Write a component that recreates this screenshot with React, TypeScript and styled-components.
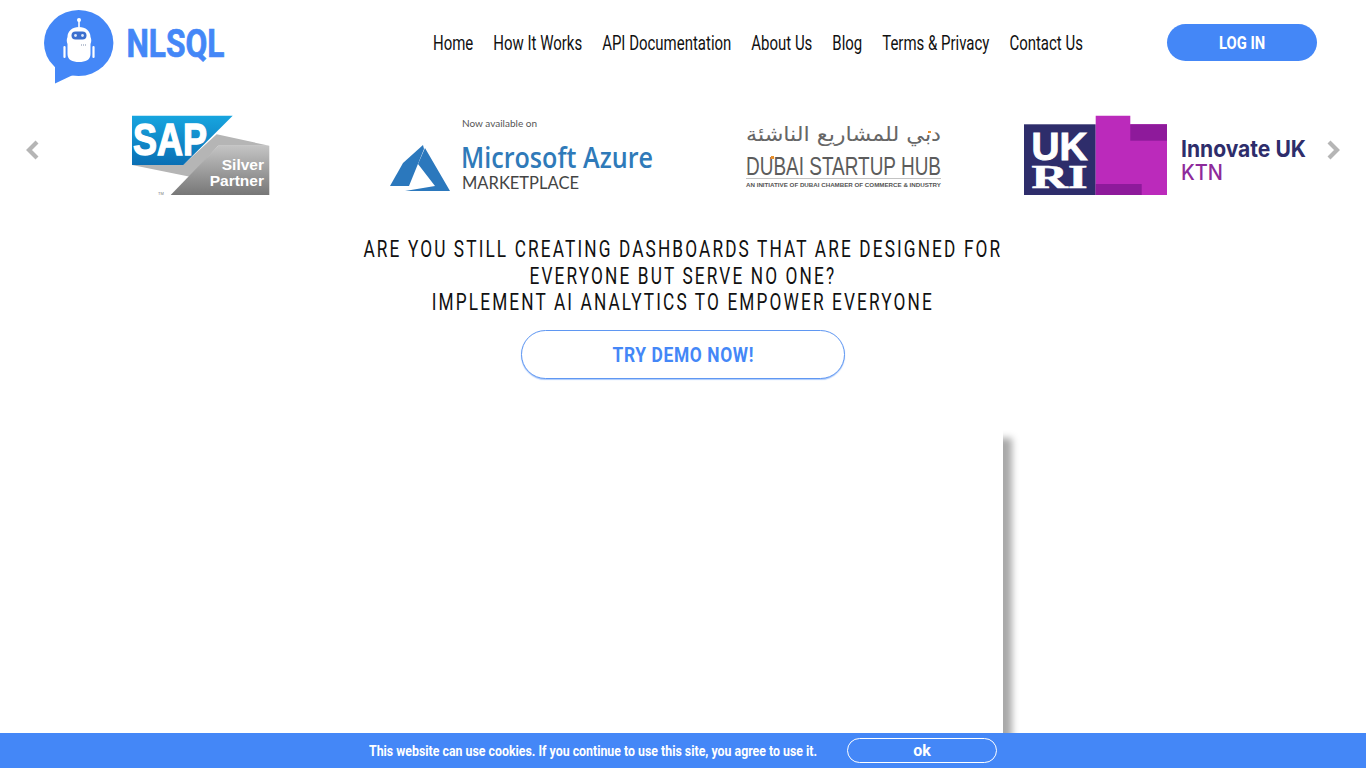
import React from "react";
import styled, { createGlobalStyle } from "styled-components";

const Global = createGlobalStyle`
  html, body { margin: 0; padding: 0; height: 100%; background: #fff; overflow: hidden; }
  body { font-family: "Roboto", "Liberation Sans", sans-serif; }
`;
const Page = styled.div`height: 768px; overflow: hidden; position: relative;`;
const Header = styled.header`display: flex; align-items: center; height: 85px; padding: 0 49px 0 44px;`;
const LogoSvg = styled.svg`width: 181px; height: 74px; align-self: flex-start; margin-top: 10px; flex: none;`;
const Nav = styled.nav`width: 648px; flex: none; margin-left: 208px; padding-top: 2px;`;
const NavList = styled.div`
  display: inline-flex; gap: 26px; transform: scaleX(.768); transform-origin: left center; white-space: nowrap;
`;
const NavLink = styled.a`
  font-family: "Roboto", sans-serif; font-size: 19.5px; line-height: 24px; color: #111; text-decoration: none;
`;
const Squeezed = styled.span<{ $x: number; $origin?: string }>`
  display: inline-block; white-space: nowrap; transform: scaleX(${(p) => p.$x}); transform-origin: ${(p) => p.$origin ?? "center"} center;
`;
const Login = styled.button`
  margin-left: auto; width: 150px; height: 37px; border: 0; border-radius: 19px; background: #4487f7; color: #fff;
  font-family: "Roboto", sans-serif; font-weight: 700; font-size: 18px; padding: 0;
`;
const Carousel = styled.section`position: relative; margin-top: 30px; padding: 0 40px; height: 81px; display: grid; grid-template-columns: repeat(4, 1fr);`;
const Slide = styled.div`display: flex; justify-content: center; align-items: flex-start;`;
const Arrow = styled.svg<{ $side: "left" | "right" }>`
  position: absolute; top: 24px; width: 16px; height: 22px;
  ${(p) => (p.$side === "left" ? "left: 25px;" : "right: 25px;")}
`;
const Hero = styled.section`display: flex; flex-direction: column; align-items: center; margin-top: 41px;`;
const Heading = styled.h1`
  margin: 0; width: max-content; white-space: nowrap; text-align: center; font-family: "Roboto", sans-serif; font-weight: 400;
  font-size: 23px; line-height: 26.5px; letter-spacing: 2.83px; color: #111; transform: scaleX(.75);
`;
const Demo = styled.button`
  margin-top: 13px; width: 324px; height: 49px; border: 1px solid #5f97f2; border-radius: 25px; background: #fff; color: #4487f7;
  box-shadow: 0 1px 1px rgba(68,135,247,.45);
  font-family: "Roboto", sans-serif; font-weight: 700; font-size: 20px; letter-spacing: .7px; padding: 2px 0 0;
`;
const VideoFrame = styled.div`
  margin: 51px auto 0; width: 640px; height: 400px; background: #fff; box-shadow: 9px 8px 7px #a9a9a9;
`;
const Cookie = styled.div`
  position: fixed; left: 0; right: 0; bottom: 0; height: 35px; background: #4487f7; display: flex; align-items: center; padding-left: 369px;
`;
const CookieText = styled.div`
  font-family: "Roboto", sans-serif; font-weight: 700; font-size: 15.5px; color: #fff; width: 478px; flex: none;
`;
const CookieBtn = styled.button`
  width: 150px; height: 25px; border: 1px solid #fff; border-radius: 13px; background: transparent; color: #fff; padding: 0;
  font-family: "Roboto", sans-serif; font-weight: 700; font-size: 16px;
`;

const Logo = () => (
  <LogoSvg viewBox="44 10 181 74">
    <ellipse cx="78.7" cy="43" rx="34.7" ry="33" fill="#4487f7" />
    <polygon points="55,64 55,83.5 75,74" fill="#4487f7" />
    <circle cx="79" cy="20" r="2" fill="#fff" />
    <rect x="78.2" y="20" width="1.6" height="7" fill="#fff" />
    <path d="M67.5 37c0-6 5-10 11.5-10s11.5 4 11.5 10c1 2 1 5 0 7v10c0 6-5 8-11.5 8s-11.5-2-11.5-8V44c-1-2-1-5 0-7z" fill="#fff" />
    <rect x="71.5" y="31.5" width="15" height="8" rx="4" fill="#3b6fcf" />
    <circle cx="75.5" cy="35.5" r="1.4" fill="#dbe7fb" />
    <circle cx="82.5" cy="35.5" r="1.4" fill="#dbe7fb" />
    <path d="M81 45h6" stroke="#7a8aa8" strokeWidth="1.2" strokeDasharray="1 1" />
    <path d="M64.5 47v10M93.5 47v10" stroke="#fff" strokeWidth="2.2" strokeLinecap="round" />
    <text x="126.5" y="57" fontFamily="Roboto, sans-serif" fontWeight="700" fontSize="39" fill="#4487f7" stroke="#4487f7" strokeWidth=".7" textLength="98" lengthAdjust="spacingAndGlyphs">NLSQL</text>
  </LogoSvg>
);

const SapLogo = () => (
  <svg width="138" height="81" viewBox="0 0 138 81">
    <defs>
      <linearGradient id="sapDark" x1="0" y1="0" x2="0" y2="1"><stop offset="0" stopColor="#c4c4c4" /><stop offset="1" stopColor="#777" /></linearGradient>
      <linearGradient id="sapBlue" x1="0" y1="0" x2="0" y2="1"><stop offset="0" stopColor="#17a5df" /><stop offset="1" stopColor="#0a6fb4" /></linearGradient>
    </defs>
    <polygon points="84.7,19.3 137.3,30.7 86.3,30.7 58,61.7 0,50 51,50" fill="#b5b5b5" />
    <polygon points="0,0.7 100.7,0.7 51.3,50 0,50" fill="url(#sapBlue)" />
    <polygon points="86.3,30.7 137.3,30.7 137.3,80 38.7,80" fill="url(#sapDark)" />
    <text x="1" y="40" fontFamily="Liberation Sans, sans-serif" fontWeight="700" fontSize="44" fill="#fff" stroke="#fff" strokeWidth="1.4" textLength="74" lengthAdjust="spacingAndGlyphs">SAP</text>
    <text x="132" y="55" textAnchor="end" fontFamily="Liberation Sans, sans-serif" fontWeight="700" fontSize="15.5" fill="#fff">Silver</text>
    <text x="132" y="71" textAnchor="end" fontFamily="Liberation Sans, sans-serif" fontWeight="700" fontSize="15.5" fill="#fff">Partner</text>
    <text x="26" y="80" fontFamily="Liberation Sans, sans-serif" fontSize="4" fill="#777">TM</text>
  </svg>
);

const AzureLogo = () => (
  <svg width="264" height="78" viewBox="0 0 264 78" style={{ marginTop: 3 }}>
    <polygon points="33,27 13,45 0,68 19,68 34,31" fill="#2b78bd" />
    <polygon points="35,30 60,73 15,73 45,68 28,46" fill="#2b78bd" />
    <text x="72" y="9" fontFamily="Lato, sans-serif" fontSize="10" fill="#555" textLength="75">Now available on</text>
    <text x="71" y="50" fontFamily="Open Sans, sans-serif" fontWeight="600" fontSize="29" fill="#2f7ab9" textLength="192" lengthAdjust="spacingAndGlyphs">Microsoft Azure</text>
    <text x="72" y="71" fontFamily="Lato, sans-serif" fontSize="16.5" fill="#444" textLength="117" lengthAdjust="spacingAndGlyphs">MARKETPLACE</text>
  </svg>
);

const DubaiLogo = () => (
  <svg width="198" height="74" viewBox="0 0 198 74" style={{ marginTop: 10 }}>
    <text x="196" y="16" direction="rtl" fontFamily="DejaVu Sans, sans-serif" fontSize="20" fill="#666" textLength="195" lengthAdjust="spacingAndGlyphs">دبي للمشاريع الناشئة</text>
    <rect x="183" y="6" width="3" height="2" fill="#e8902a" />
    <text x="1" y="50" fontFamily="Liberation Sans, sans-serif" fontSize="25" fill="#5c5c5c" textLength="195" lengthAdjust="spacingAndGlyphs">DUBAI STARTUP HUB</text>
    <rect x="26" y="31" width="3" height="3" fill="#e8902a" />
    <rect x="1" y="53" width="195" height="0.7" fill="#aaa" />
    <text x="1" y="62" fontFamily="Liberation Sans, sans-serif" fontWeight="700" fontSize="5.4" fill="#555" textLength="195" lengthAdjust="spacingAndGlyphs">AN INITIATIVE OF DUBAI CHAMBER OF COMMERCE &amp; INDUSTRY</text>
  </svg>
);

const KtnLogo = () => (
  <svg width="283" height="81" viewBox="0 0 283 81">
    <rect x="0" y="9.3" width="71.7" height="70.7" fill="#2e2d6b" />
    <polygon points="71.7,0.7 106.3,0.7 106.3,9.3 143,9.3 143,80 71.7,80" fill="#bb2abb" />
    <rect x="106.3" y="9.3" width="36.7" height="16.4" fill="#8e1a9b" />
    <rect x="71.7" y="69" width="46" height="11" fill="#8e1a9b" />
    <text x="7.5" y="45" fontFamily="Liberation Sans, sans-serif" fontWeight="700" fontSize="39" fill="#fff" stroke="#fff" strokeWidth="1" textLength="56" lengthAdjust="spacingAndGlyphs">UK</text>
    <text x="7.5" y="72.7" fontFamily="Liberation Serif, serif" fontWeight="700" fontSize="33" fill="#fff" stroke="#fff" strokeWidth=".6" textLength="56" lengthAdjust="spacingAndGlyphs">RI</text>
    <text x="157" y="42" fontFamily="Inter, sans-serif" fontWeight="700" fontSize="23" fill="#2e2d6b" textLength="125" lengthAdjust="spacingAndGlyphs">Innovate UK</text>
    <text x="157" y="65" fontFamily="Inter, sans-serif" fontWeight="500" fontSize="22" fill="#8e2a9b" textLength="42" lengthAdjust="spacingAndGlyphs">KTN</text>
  </svg>
);

export default function App() {
  return (
    <Page>
      <Global />
      <Header>
        <Logo />
        <Nav>
          <NavList>
            {["Home", "How It Works", "API Documentation", "About Us", "Blog", "Terms & Privacy", "Contact Us"].map((t) => (
              <NavLink key={t} href="#">{t}</NavLink>
            ))}
          </NavList>
        </Nav>
        <Login><Squeezed $x={0.82}>LOG IN</Squeezed></Login>
      </Header>
      <Carousel>
        <Arrow $side="left" viewBox="0 0 16 22"><polyline points="12,3 4,11 12,19" fill="none" stroke="#b5b5b5" strokeWidth="4.2" /></Arrow>
        <Slide><SapLogo /></Slide>
        <Slide><AzureLogo /></Slide>
        <Slide><DubaiLogo /></Slide>
        <Slide><KtnLogo /></Slide>
        <Arrow $side="right" viewBox="0 0 16 22"><polyline points="4,3 12,11 4,19" fill="none" stroke="#b5b5b5" strokeWidth="4.2" /></Arrow>
      </Carousel>
      <Hero>
        <Heading>
          ARE YOU STILL CREATING DASHBOARDS THAT ARE DESIGNED FOR<br />
          EVERYONE BUT SERVE NO ONE?<br />
          IMPLEMENT AI ANALYTICS TO EMPOWER EVERYONE
        </Heading>
        <Demo><Squeezed $x={0.87}>TRY DEMO NOW!</Squeezed></Demo>
      </Hero>
      <VideoFrame />
      <Cookie>
        <CookieText><Squeezed $x={0.797} $origin="left">This website can use cookies. If you continue to use this site, you agree to use it.</Squeezed></CookieText>
        <CookieBtn>ok</CookieBtn>
      </Cookie>
    </Page>
  );
}
